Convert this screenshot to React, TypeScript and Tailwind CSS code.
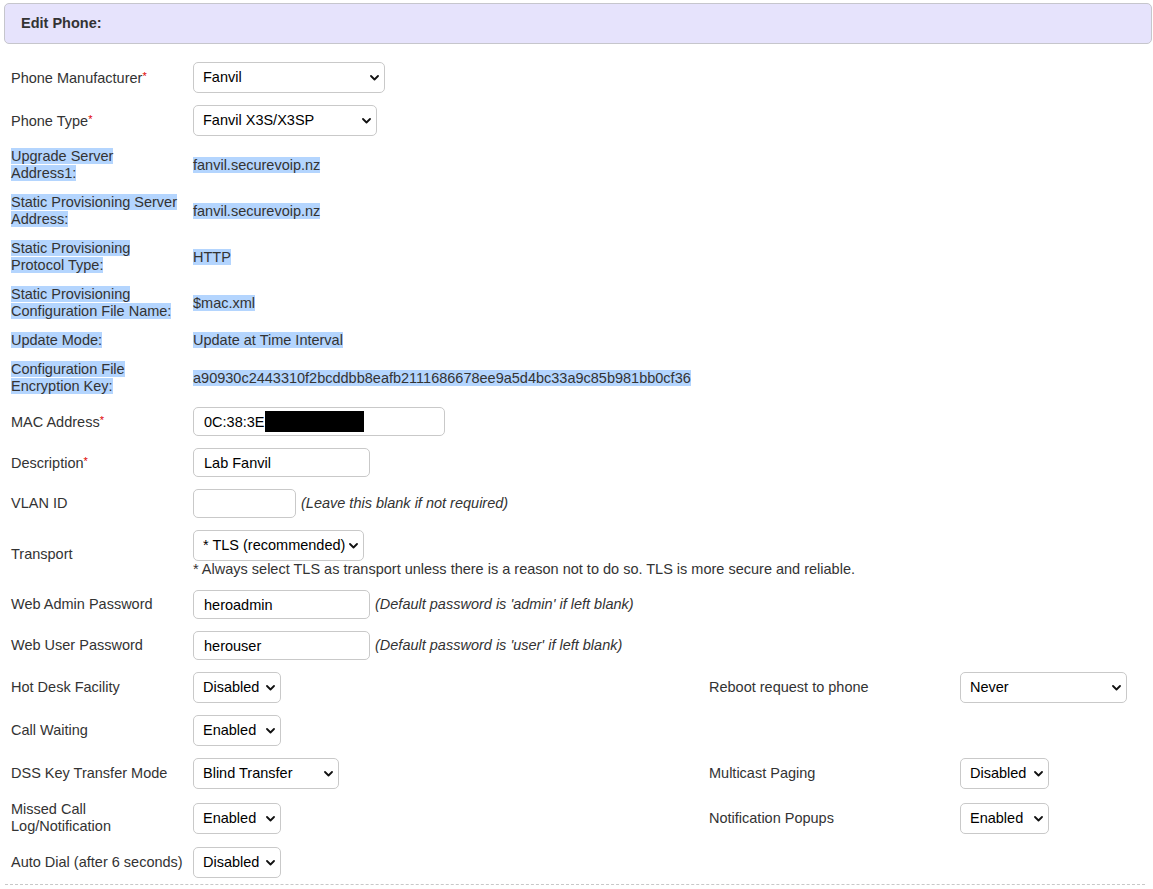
import React from "react";

const cell = "px-[6px] py-[6px] flex items-center";
const hl = "bg-[#b4d5fe]";

function Label({ text, req }: { text: string; req?: boolean }) {
  return (
    <div>
      {text}
      {req && <span className="text-[#e00000] text-[11px] align-[3px]">*</span>}
    </div>
  );
}

function Marked({ children }: { children: React.ReactNode }) {
  return (
    <div>
      <span className={hl}>{children}</span>
    </div>
  );
}

function Dropdown({ value, w }: { value: string; w: string }) {
  return (
    <div className={`relative h-[31px] ${w}`}>
      <select
        value={value}
        onChange={() => {}}
        className="appearance-none w-full h-full rounded-[5px] border border-[#c9c9c9] bg-white pl-[9px] text-black outline-none"
      >
        <option>{value}</option>
      </select>
      <svg
        className="pointer-events-none absolute right-[6px] top-[13px]"
        width="9"
        height="6"
        viewBox="0 0 9 6"
      >
        <path d="M1 1l3.5 3.5L8 1" fill="none" stroke="#111" strokeWidth="1.8" strokeLinecap="round" strokeLinejoin="round" />
      </svg>
    </div>
  );
}

function TextBox({ value, w }: { value: string; w: string }) {
  return (
    <input
      value={value}
      readOnly
      className={`h-[29px] rounded-[5px] border border-[#c9c9c9] bg-white px-[10px] text-black outline-none ${w}`}
    />
  );
}

function Hint({ children }: { children: React.ReactNode }) {
  return <span className="ml-[5px] italic text-[#333]">{children}</span>;
}

export default function App() {
  return (
    <div className="bg-white min-h-screen font-['Liberation_Sans',Arial,sans-serif] text-[14.5px] leading-[17px] text-[#333] pt-[3px]">
      <div className="ml-[4px] mr-[1px] h-[41px] rounded-[5px] border border-[#c6c6cc] bg-[#e6e3fc] pl-[16px] flex items-center font-bold">
        Edit Phone:
      </div>

      <div className="mt-[12px] ml-[5px] w-[1140px] grid grid-cols-[182px_516px_251px_191px] border-b border-dashed border-[#c8c8c8]">
        <div className={cell}><Label text="Phone Manufacturer" req /></div>
        <div className={`${cell} col-span-3`}><Dropdown value="Fanvil" w="w-[192px]" /></div>

        <div className={cell}><Label text="Phone Type" req /></div>
        <div className={`${cell} col-span-3`}><Dropdown value="Fanvil X3S/X3SP" w="w-[184px]" /></div>

        <div className={cell}><Marked>Upgrade Server<br />Address1:</Marked></div>
        <div className={`${cell} col-span-3`}><Marked>fanvil.securevoip.nz</Marked></div>

        <div className={cell}><Marked>Static Provisioning Server<br />Address:</Marked></div>
        <div className={`${cell} col-span-3`}><Marked>fanvil.securevoip.nz</Marked></div>

        <div className={cell}><Marked>Static Provisioning<br />Protocol Type:</Marked></div>
        <div className={`${cell} col-span-3`}><Marked>HTTP</Marked></div>

        <div className={cell}><Marked>Static Provisioning<br />Configuration File Name:</Marked></div>
        <div className={`${cell} col-span-3`}><Marked>$mac.xml</Marked></div>

        <div className={cell}><Marked>Update Mode:</Marked></div>
        <div className={`${cell} col-span-3`}><Marked>Update at Time Interval</Marked></div>

        <div className={cell}><Marked>Configuration File<br />Encryption Key:</Marked></div>
        <div className={`${cell} col-span-3`}>
          <Marked>a90930c2443310f2bcddbb8eafb2111686678ee9a5d4bc33a9c85b981bb0cf36</Marked>
        </div>

        <div className={cell}><Label text="MAC Address" req /></div>
        <div className={`${cell} col-span-3`}>
          <div className="relative">
            <TextBox value="0C:38:3E:" w="w-[252px]" />
            <div className="absolute left-[72px] top-[4px] w-[99px] h-[21px] bg-black" />
          </div>
        </div>

        <div className={cell}><Label text="Description" req /></div>
        <div className={`${cell} col-span-3`}><TextBox value="Lab Fanvil" w="w-[177px]" /></div>

        <div className={cell}>VLAN ID</div>
        <div className={`${cell} col-span-3`}>
          <TextBox value="" w="w-[103px]" />
          <Hint>(Leave this blank if not required)</Hint>
        </div>

        <div className={cell}>Transport</div>
        <div className={`${cell} col-span-3 flex-col !items-start`}>
          <Dropdown value="* TLS (recommended)" w="w-[171px]" />
          <span>* Always select TLS as transport unless there is a reason not to do so. TLS is more secure and reliable.</span>
        </div>

        <div className={cell}>Web Admin Password</div>
        <div className={`${cell} col-span-3`}>
          <TextBox value="heroadmin" w="w-[177px]" />
          <Hint>(Default password is 'admin' if left blank)</Hint>
        </div>

        <div className={cell}>Web User Password</div>
        <div className={`${cell} col-span-3`}>
          <TextBox value="herouser" w="w-[177px]" />
          <Hint>(Default password is 'user' if left blank)</Hint>
        </div>

        <div className={cell}>Hot Desk Facility</div>
        <div className={cell}><Dropdown value="Disabled" w="w-[88px]" /></div>
        <div className={cell}>Reboot request to phone</div>
        <div className={cell}><Dropdown value="Never" w="w-[167px]" /></div>

        <div className={cell}>Call Waiting</div>
        <div className={cell}><Dropdown value="Enabled" w="w-[88px]" /></div>
        <div className={cell}></div>
        <div className={cell}></div>

        <div className={cell}>DSS Key Transfer Mode</div>
        <div className={cell}><Dropdown value="Blind Transfer" w="w-[146px]" /></div>
        <div className={cell}>Multicast Paging</div>
        <div className={cell}><Dropdown value="Disabled" w="w-[89px]" /></div>

        <div className={cell}>Missed Call<br />Log/Notification</div>
        <div className={cell}><Dropdown value="Enabled" w="w-[88px]" /></div>
        <div className={cell}>Notification Popups</div>
        <div className={cell}><Dropdown value="Enabled" w="w-[89px]" /></div>

        <div className={`${cell} whitespace-nowrap`}>Auto Dial (after 6 seconds)</div>
        <div className={cell}><Dropdown value="Disabled" w="w-[88px]" /></div>
        <div className={cell}></div>
        <div className={cell}></div>
      </div>
    </div>
  );
}
